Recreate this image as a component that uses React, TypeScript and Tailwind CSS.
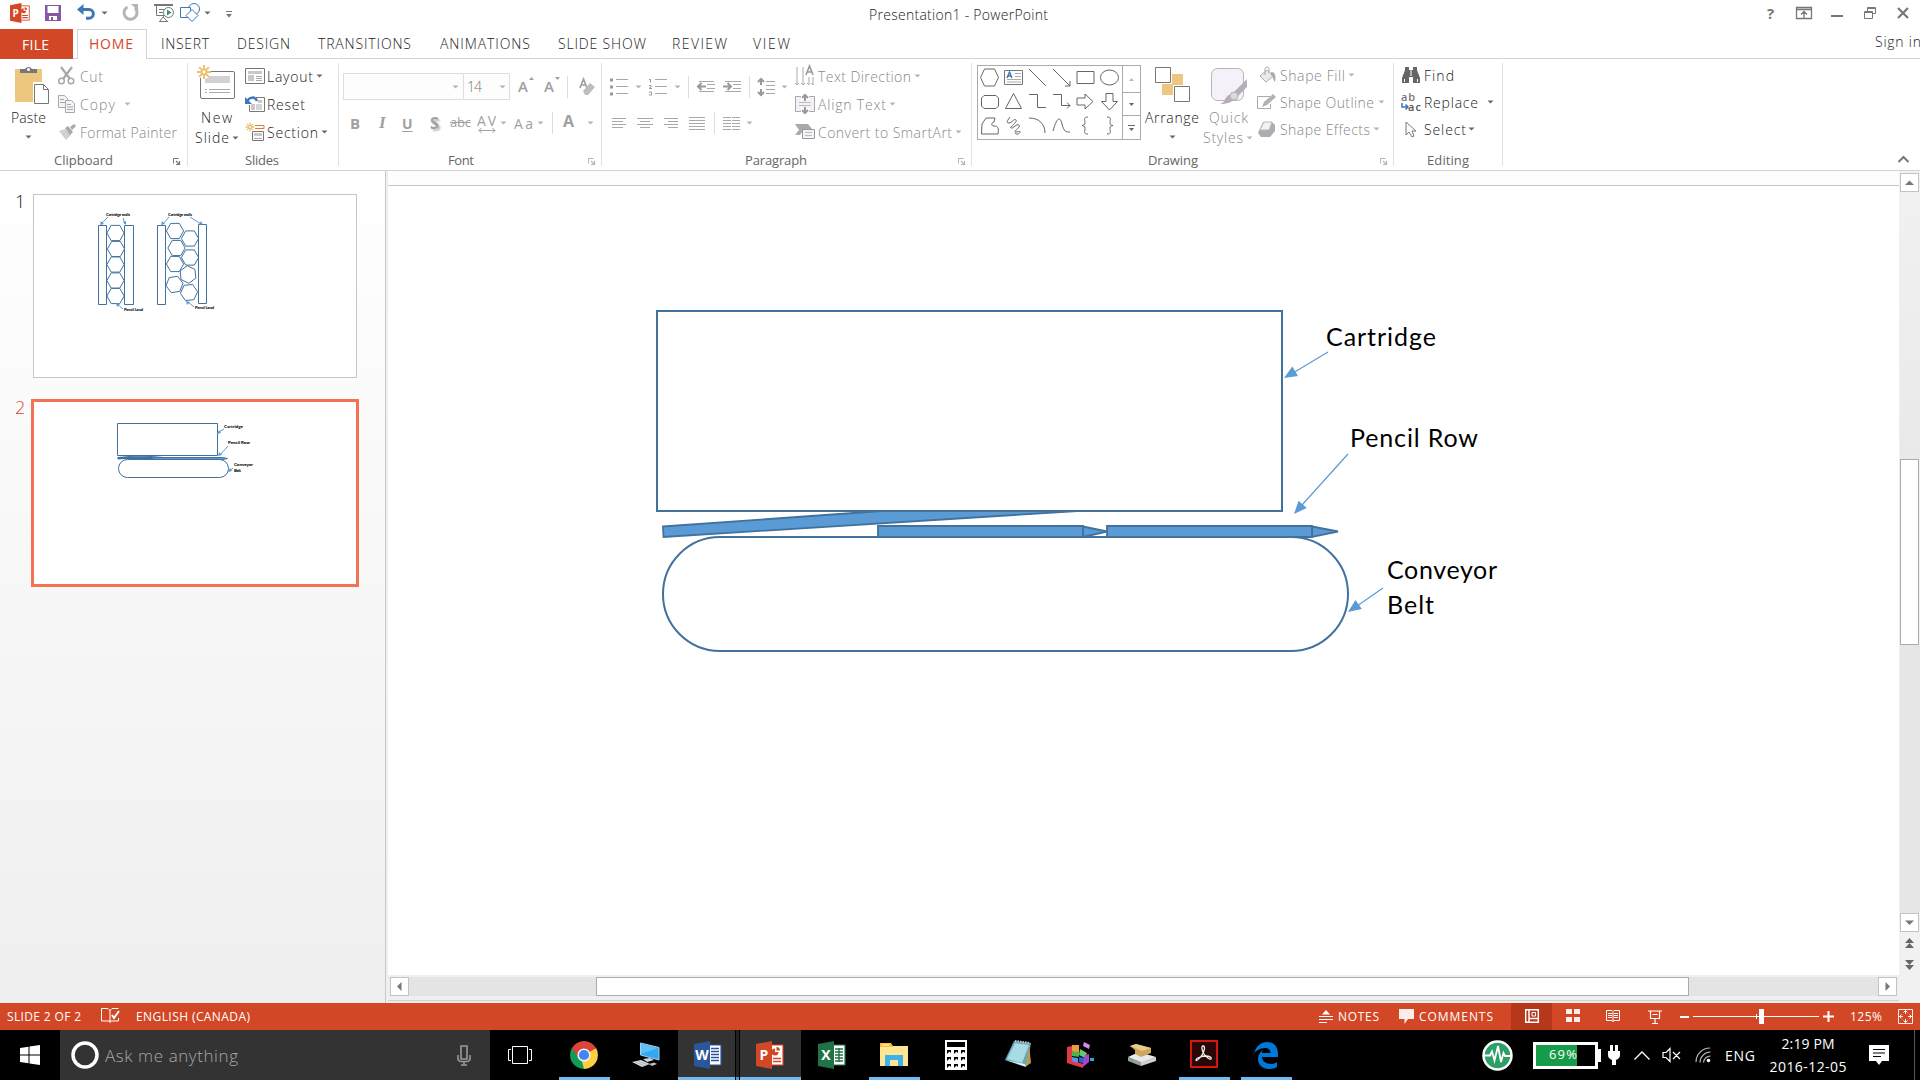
import React, { useLayoutEffect, useRef, useState } from "react";

type Kids = { children?: React.ReactNode };

/* Single line of text spaced to fill exactly `w` pixels. */
function Label({ t, w, className = "", inner = "" }: { t: string; w: number; className?: string; inner?: string }) {
  const ref = useRef<HTMLSpanElement>(null);
  const [ls, setLs] = useState(0);
  useLayoutEffect(() => {
    if (ref.current) {
      const natural = ref.current.getBoundingClientRect().width;
      setLs((w + 2 - natural) / Math.max(1, t.length - 1));
    }
  }, [t, w]);
  return (
    <span className={`block shrink-0 whitespace-nowrap ${className}`} style={{ width: w }}>
      <span ref={ref} className={`-ml-px inline-block ${inner}`} style={{ letterSpacing: ls }}>
        {t}
      </span>
    </span>
  );
}

function Ic({ w, h, className = "", children }: { w: number; h: number; className?: string } & Kids) {
  return (
    <svg width={w} height={h} viewBox={`0 0 ${w} ${h}`} fill="none" className={`block shrink-0 overflow-visible ${className}`}>
      {children}
    </svg>
  );
}

function Caret({ className = "", off = false }: { className?: string; off?: boolean }) {
  return (
    <Ic w={7} h={4} className={className}>
      <path d="M.5 .5h6l-3 3z" fill={off ? "#b5b5b5" : "#666"} />
    </Ic>
  );
}

function Row({ className = "", children }: { className?: string } & Kids) {
  return <div className={`flex h-7 items-center ${className}`}>{children}</div>;
}

function Launcher({ off = false, className = "" }: { off?: boolean; className?: string }) {
  const c = off ? "#b5b5b5" : "#777";
  return (
    <Ic w={7} h={7} className={className}>
      <path d="M.5 5.500V.5h5" stroke={c} />
      <path d="M3 3l3 3M6.500 3v3.500H3" stroke={c} strokeWidth="1.200" />
    </Ic>
  );
}

function Group({ className, foot, children }: { className: string; foot: React.ReactNode } & Kids) {
  return (
    <div className={`mt-1 h-[103px] shrink-0 border-r border-[#e1e1e1] ${className}`}>
      <div className="-mt-px flex h-[84px]">{children}</div>
      <div className="flex h-6 items-center pt-[6px] text-[13px] text-[#666]">{foot}</div>
    </div>
  );
}

function Lines({ x, w, ys, c = "#a8a8a8" }: { x: number; w: number; ys: number[]; c?: string }) {
  return (
    <>
      {ys.map((y) => (
        <path key={y} d={`M${x} ${y}h${w}`} stroke={c} />
      ))}
    </>
  );
}

function OfficeIcon({ letter, dark, kind, size = 28 }: { letter: string; dark: string; kind: string; size?: number }) {
  return (
    <svg width={size} height={size} viewBox="0 0 28 28" className="block shrink-0">
      <path d="M14 4h13v20H14z" fill="#fff" stroke={dark} strokeWidth="1.200" />
      {kind === "doc" && <path d="M17 7.500h8M17 10.500h8M17 13.500h8M17 16.500h8M17 19.500h8" stroke={dark} strokeWidth="1.500" />}
      {kind === "grid" && <path d="M17 8h8M17 11h8M17 14h8M17 17h8M17 20h8M21 7v14" stroke={dark} strokeWidth="1.400" />}
      {kind === "chart" && (
        <>
          <path d="M19 7.500a3.500 3.500 0 1 0 3.500 3.500H19z" fill={dark} />
          <path d="M20.500 6v3.500H24A3.500 3.500 0 0 0 20.500 6z" fill={dark} />
          <path d="M17 17.500h8M17 20.500h8" stroke={dark} strokeWidth="1.500" />
        </>
      )}
      <path d="M0 3L16 0v28L0 25z" fill={dark} />
      <text x="8" y="19" textAnchor="middle" fontSize="14" fontWeight="700" fill="#fff" fontFamily="Open Sans, sans-serif">
        {letter}
      </text>
    </svg>
  );
}

function TitleBar() {
  return (
    <div className="flex h-[29px] items-start">
      <div className="flex h-[25px] w-[868px] items-center">
        <div className="ml-[10px]">
          <OfficeIcon letter="P" dark="#d24726" kind="chart" size={20} />
        </div>
        <Ic w={16} h={16} className="ml-[15px]">
          <path d="M0 0h16v16H0z" fill="#8657a6" />
          <path d="M2.500 1h11v7h-11zM4 11h8v4H4z" fill="#fff" />
          <path d="M6 12h2v4H6z" fill="#8657a6" />
        </Ic>
        <Ic w={18} h={17} className="ml-4">
          <path d="M3 5.500h9a4.300 4.300 0 0 1 0 8.700H9" stroke="#3f76b5" strokeWidth="3" />
          <path d="M0 5.500L6.500 0v11z" fill="#3f76b5" />
        </Ic>
        <Caret className="ml-[6px]" />
        <Ic w={17} h={17} className="ml-[14px]">
          <path d="M5.500 3A6.500 6.500 0 1 0 13 4" stroke="#b5b5b5" strokeWidth="3" />
          <path d="M9 0h7v7z" fill="#b5b5b5" />
        </Ic>
        <Ic w={20} h={18} className="ml-[15px]">
          <path d="M0 1h19" stroke="#777" strokeWidth="2" />
          <path d="M2.500 2v9.500h8M5 5.500h5M5 8.500h4M10 12l-4 5M9 13l4 4M5 17.500h9" stroke="#777" />
          <circle cx="14.500" cy="8.500" r="5" fill="#fff" stroke="#777" />
          <path d="M13 5.500l4.500 3-4.500 3z" fill="#38976f" />
        </Ic>
        <Ic w={20} h={19} className="ml-[6px]">
          <circle cx="14" cy="6" r="5.500" stroke="#3f76b5" />
          <path d="M.5 4.500h10v10H.5z" fill="#fff" stroke="#3f76b5" />
          <path d="M12 6.500l6 6-6 6-6-6z" fill="#fff" stroke="#3f76b5" />
        </Ic>
        <Caret className="ml-[4px]" />
        <Ic w={6} h={7} className="ml-[15px] mt-[3px]">
          <path d="M0 .5h6" stroke="#777" />
          <path d="M0 3h6L3 6.500z" fill="#777" />
        </Ic>
      </div>
      <Label t="Presentation1 - PowerPoint" w={177} className="ml-[2px] mt-[5px] text-[14px] font-light leading-[20px] text-[#222]" />
      <div className="ml-auto mr-[11px] flex h-[26px] items-center">
        <Label t="?" w={8} className="mr-[20px] text-[15px] font-bold text-[#777]" />
        <Ic w={16} h={12} className="mr-[19px]">
          <path d="M.5.5h15v11H.5zM1 2.500h14M8 11V5M5 7.500l3-3 3 3" stroke="#777" strokeWidth="1.300" />
        </Ic>
        <Ic w={12} h={12} className="mr-[21px]">
          <path d="M0 9h12" stroke="#777" strokeWidth="2" />
        </Ic>
        <Ic w={12} h={12} className="mr-[21px]">
          <path d="M3.500 4V.5h8v6H9M.5 4.500h8v7h-8zM3 1.500h8M1 5.500h7" stroke="#777" />
        </Ic>
        <Ic w={12} h={12}>
          <path d="M1 1l10 10M11 1L1 11" stroke="#777" strokeWidth="2.200" />
        </Ic>
      </div>
    </div>
  );
}

function Tabs() {
  return (
    <div className="flex h-[30px] text-[14px] font-light text-[#222]">
      <div className="flex w-[73px] items-center bg-[#d24726] pl-[23px] font-normal text-white">
        <Label t="FILE" w={25} />
      </div>
      <div className="w-1 border-b border-[#d4d4d4]" />
      <div className="flex w-[70px] items-center border-x border-t border-[#d4d4d4] pb-[2px] pl-[12px] font-normal text-[#d24726]">
        <Label t="HOME" w={42} />
      </div>
      <div className="flex flex-1 items-center border-b border-[#d4d4d4] pb-px pl-[15px]">
        <Label t="INSERT" w={46} />
        <Label t="DESIGN" w={51} className="ml-[30px]" />
        <Label t="TRANSITIONS" w={91} className="ml-[30px]" />
        <Label t="ANIMATIONS" w={88} className="ml-[31px]" />
        <Label t="SLIDE SHOW" w={86} className="ml-[30px]" />
        <Label t="REVIEW" w={53} className="ml-[28px]" />
        <Label t="VIEW" w={35} className="ml-[28px]" />
        <Label t="Sign in" w={44} className="-mt-[3px] ml-auto" />
      </div>
    </div>
  );
}

function ClipboardGroup() {
  return (
    <Group
      className="w-[188px]"
      foot={
        <>
          <Label t="Clipboard" w={57} className="ml-[55px]" />
          <Launcher className="ml-[61px]" />
        </>
      }
    >
      <div className="flex w-[57px] flex-col pt-[4px]">
        <Ic w={35} h={39} className="ml-[15px]">
          <path d="M0 3h27v33H0z" fill="#edc77f" />
          <path d="M5 7V3h5a4 4 0 0 1 7 0h5v4z" fill="#777" />
          <circle cx="13.500" cy="3.500" r="1.500" fill="#fff" />
          <path d="M18 16h17v22H18z" fill="#fff" />
          <path d="M19.500 18.500h9l5 5v14h-14zM28.500 18.500v5h5" fill="#fff" stroke="#777" />
        </Ic>
        <Label t="Paste" w={33} className="ml-[12px] mt-[2px] text-[14px] font-light text-[#222]" />
        <Caret className="ml-[25px] mt-[7px]" />
      </div>
      <div className="text-[14px] font-light text-[#888]">
        <Row>
          <Ic w={17} h={18} className="ml-px">
            <path d="M3 0l9 12M14 0L5 12" stroke="#a8a8a8" strokeWidth="2.200" />
            <circle cx="3.500" cy="14" r="2.800" stroke="#a8a8a8" strokeWidth="1.500" />
            <circle cx="13" cy="14" r="2.800" stroke="#a8a8a8" strokeWidth="1.500" />
          </Ic>
          <Label t="Cut" w={21} className="ml-[6px]" />
        </Row>
        <Row>
          <Ic w={17} h={18} className="ml-px">
            <path d="M.5.5h6l3 3v9h-9z" fill="#f6f1f8" stroke="#a8a8a8" />
            <path d="M2 4.500h4M2 7.500h5" stroke="#a8a8a8" />
            <path d="M7.500 5.500h6l3 3v9h-9z" fill="#f6f1f8" stroke="#a8a8a8" />
            <path d="M9 9.500h4M9 12h6M9 14.500h6" stroke="#a8a8a8" />
          </Ic>
          <Label t="Copy" w={33} className="ml-[6px]" />
          <Caret off className="ml-[10px]" />
        </Row>
        <Row>
          <Ic w={17} h={16} className="ml-[2px]">
            <path d="M0 7l6-2 6 6-5 5z" fill="#d2ced4" />
            <path d="M6 4l3-2 5 6-3 3zM11 3l4-3 2 2-4 4z" fill="#aaa" />
          </Ic>
          <Label t="Format Painter" w={95} className="ml-[5px]" />
        </Row>
      </div>
    </Group>
  );
}

function Burst({ s = 7 }: { s?: number }) {
  return (
    <g stroke="#edc170" strokeWidth={s / 3.5}>
      <path d={`M${-s} 0H${s}M0 ${-s}V${s}M${-s * 0.7} ${-s * 0.7}L${s * 0.7} ${s * 0.7}M${s * 0.7} ${-s * 0.7}L${-s * 0.7} ${s * 0.7}`} />
      <circle r={s * 0.35} fill="#fff" />
    </g>
  );
}

function SlidesGroup() {
  return (
    <Group className="w-[151px]" foot={<Label t="Slides" w={32} className="ml-[58px]" />}>
      <div className="flex w-[56px] flex-col pt-[3px] text-[14px] font-light text-[#222]">
        <Ic w={38} h={35} className="ml-[9px]">
          <rect x="3.500" y="6.500" width="34" height="27" rx="1.500" stroke="#777" fill="#fff" />
          <path d="M8 11h25v7H8z" fill="#d2d2d2" />
          <path d="M12 24.500h21M12 27.500h21M8 24.500h2M8 27.500h2" stroke="#aaa" />
          <circle cx="7" cy="7" r="7" fill="#fff" />
          <g transform="translate(7 7)">
            <Burst />
          </g>
        </Ic>
        <Label t="New" w={29} className="ml-[14px] mt-[7px]" />
        <div className="-mt-px flex items-center">
          <Label t="Slide" w={32} className="ml-[8px]" />
          <Caret className="ml-[4px]" />
        </div>
      </div>
      <div className="text-[14px] font-light text-[#222]">
        <Row>
          <Ic w={20} h={16} className="ml-px">
            <path d="M.5.5h19v15H.5z" stroke="#777" />
            <path d="M3 3h14v3H3zM3 7h6v6H3z" fill="#c8c8c8" />
            <path d="M11 8.500h6M11 10.500h6M11 12.500h6" stroke="#aaa" />
          </Ic>
          <Label t="Layout" w={44} className="ml-[3px]" />
          <Caret className="ml-[4px]" />
        </Row>
        <Row>
          <Ic w={20} h={17} className="ml-px">
            <path d="M11 1.500h8.500v14h-15V9" stroke="#777" />
            <path d="M13 4h4v3h-4zM6 8h4v6H6z" fill="#c8c8c8" />
            <path d="M11 9h6M11 11h6M11 13h6" stroke="#aaa" />
            <path d="M2 5C5 1 10 0 12 5" stroke="#3f76b5" strokeWidth="2.500" />
            <path d="M0 1v7h7z" fill="#3f76b5" />
          </Ic>
          <Label t="Reset" w={36} className="ml-[3px]" />
        </Row>
        <Row>
          <Ic w={19} h={18} className="ml-[2px]">
            <path d="M9 2.500h9v3H9" stroke="#e07b35" />
            <path d="M6.500 8.500h11v9h-11z" stroke="#777" />
            <path d="M8 10h8v3H8z" fill="#c8c8c8" />
            <path d="M8 15.500h8" stroke="#aaa" />
            <g transform="translate(4 4)">
              <Burst s={4.500} />
            </g>
          </Ic>
          <Label t="Section" w={49} className="ml-[3px]" />
          <Caret className="ml-[4px]" />
        </Row>
      </div>
    </Group>
  );
}

function Sep({ className = "" }: { className?: string }) {
  return <div className={`h-[22px] w-px shrink-0 bg-[#dedede] ${className}`} />;
}

function FontGroup() {
  return (
    <Group
      className="w-[263px]"
      foot={
        <>
          <Label t="Font" w={24} className="ml-[110px]" />
          <Launcher off className="ml-[115px]" />
        </>
      }
    >
      <div className="flex flex-col text-[#a0a0a0]">
        <div className="mt-[11px] flex h-[27px] items-center pl-[4px]">
          <div className="flex h-[27px] w-[121px] items-center border border-[#dedede] bg-[#fdfdfd]">
            <Caret off className="ml-[108px]" />
          </div>
          <div className="-ml-px flex h-[27px] w-[47px] items-center border border-[#dedede] bg-[#fdfdfd]">
            <Label t="14" w={13} className="ml-[4px] text-[14px] font-light text-[#777]" />
            <Caret off className="ml-[18px]" />
          </div>
          <Label t="A" w={10} className="ml-[9px] text-[15px] font-semibold" />
          <Ic w={5} h={3} className="-mt-4">
            <path d="M0 3h5L2.500 0z" fill="#a0a0a0" />
          </Ic>
          <Label t="A" w={10} className="ml-[11px] text-[15px] font-semibold" />
          <Ic w={5} h={3} className="-mt-4">
            <path d="M0 0h5L2.500 3z" fill="#a0a0a0" />
          </Ic>
          <Sep className="ml-[7px]" />
          <Ic w={17} h={19} className="ml-[11px]">
            <path d="M1 11L4.500 2 8 11M2.500 8h4" stroke="#a0a0a0" strokeWidth="1.700" />
            <path d="M4 14l7-8 5 4-7 8H6z" fill="#bdbdbd" />
          </Ic>
        </div>
        <div className="mt-[9px] flex h-[28px] items-center">
          <Label t="B" w={9} className="ml-[12px] text-[15px] font-bold" />
          <span className="ml-[19px] w-[9px] font-['Liberation_Serif'] text-[17px] font-bold italic">I</span>
          <span className="ml-[14px] w-[11px] text-[14px] font-bold underline underline-offset-2">U</span>
          <span className="ml-[17px] w-[12px] text-[16px] font-bold [text-shadow:2px_2px_2px_#bbb]">S</span>
          <Label t="abc" w={19} className="ml-[9px] text-[13px]" inner="line-through decoration-1" />
          <div className="ml-[8px] flex flex-col">
            <Label t="AV" w={17} className="text-[14px] leading-[14px]" />
            <Ic w={18} h={5}>
              <path d="M1 2.500h16M3.500 0L1 2.500 3.500 5M14.500 0L17 2.500 14.500 5" stroke="#a0a0a0" />
            </Ic>
          </div>
          <Caret off className="ml-[4px]" />
          <Label t="Aa" w={17} className="ml-[8px] text-[14px]" />
          <Caret off className="ml-[5px]" />
          <Sep className="ml-[8px]" />
          <Label t="A" w={13} className="-mt-1 ml-[11px] text-[16px] font-bold" />
          <Caret off className="ml-[10px]" />
        </div>
      </div>
    </Group>
  );
}

function Arrows({ d }: { d: string }) {
  return <path d={d} stroke="#999" strokeWidth="2" />;
}

function ParagraphGroup() {
  return (
    <Group
      className="w-[370px]"
      foot={
        <>
          <Label t="Paragraph" w={60} className="ml-[144px]" />
          <Launcher off className="ml-[152px]" />
        </>
      }
    >
      <div className="flex w-[193px] flex-col">
        <div className="mt-[11px] flex h-[27px] items-center pl-[8px]">
          <Ic w={18} h={18}>
            <path d="M0 2h3M0 9h3M0 16h3" stroke="#999" strokeWidth="3" />
            <Lines x={6} w={12} ys={[1.5, 8.5, 15.5]} />
          </Ic>
          <Caret off className="ml-[7px]" />
          <Ic w={18} h={18} className="ml-[7px]">
            <path d="M0 1.500h1.500v3M0 7.500h2v1.500l-2 1.500h3M0 14h2.500v3H0" stroke="#999" />
            <Lines x={6} w={12} ys={[1.5, 8.5, 15.5]} />
          </Ic>
          <Caret off className="ml-[7px]" />
          <Sep className="ml-[7px]" />
          <Ic w={18} h={11} className="ml-[8px]">
            <Lines x={2} w={15} ys={[0.5, 10.5]} />
            <Lines x={10} w={8} ys={[3.5, 7.5]} />
            <Arrows d="M1 5.500h8M4.500 2L1 5.500 4.500 9" />
          </Ic>
          <Ic w={18} h={11} className="ml-[8px]">
            <Lines x={2} w={16} ys={[0.5, 10.5]} />
            <Lines x={10} w={8} ys={[3.5, 7.5]} />
            <Arrows d="M0 5.500h8M4.500 2L8 5.500 4.500 9" />
          </Ic>
          <Sep className="ml-[8px]" />
          <Ic w={17} h={18} className="ml-[8px]">
            <Lines x={8} w={9} ys={[3.5, 7.5, 11.5, 15.5]} />
            <Arrows d="M3 1v6M0 4l3-3 3 3M3 11v6M0 14l3 3 3-3" />
          </Ic>
          <Caret off className="ml-[6px]" />
        </div>
        <div className="mt-[9px] flex h-[28px] items-center pl-[10px]">
          <Ic w={14} h={13}>
            <Lines x={0} w={14} ys={[1.5, 7.5]} />
            <Lines x={0} w={11} ys={[4.5, 10.5]} />
          </Ic>
          <Ic w={16} h={13} className="ml-[11px]">
            <Lines x={0} w={16} ys={[1.5, 7.5]} />
            <Lines x={3} w={10} ys={[4.5, 10.5]} />
          </Ic>
          <Ic w={14} h={13} className="ml-[11px]">
            <Lines x={0} w={14} ys={[1.5, 7.5]} />
            <Lines x={4} w={10} ys={[4.5, 10.5]} />
          </Ic>
          <Ic w={16} h={13} className="ml-[11px]">
            <Lines x={0} w={16} ys={[0.5, 3.5, 6.5, 9.5, 12.5]} />
          </Ic>
          <Sep className="ml-[9px]" />
          <Ic w={17} h={13} className="ml-[8px]">
            <Lines x={0} w={8} ys={[0.5, 3.5, 6.5, 9.5, 12.5]} />
            <Lines x={9} w={8} ys={[0.5, 3.5, 6.5, 9.5, 12.5]} />
          </Ic>
          <Caret off className="ml-[6px]" />
        </div>
      </div>
      <div className="text-[14px] font-light text-[#888]">
        <Row>
          <Ic w={20} h={20}>
            <path d="M2 1v18M8 1v18M14 11v8M18 11v8M0 17l2 2 2-2M6 17l2 2 2-2M12 17l2 2M16 17l2 2" stroke="#aaa" />
            <path d="M11 9l3.500-9L18 9M12 6h5" stroke="#999" strokeWidth="1.600" />
          </Ic>
          <Label t="Text Direction" w={91} className="ml-[4px]" />
          <Caret off className="ml-[4px]" />
        </Row>
        <Row>
          <Ic w={20} h={18}>
            <path d="M.5 1.500h19v15H.5z" fill="#f6f1f8" stroke="#aaa" />
            <path d="M6 0h8v5H6zM6 13h8v5H6z" fill="#fff" />
            <path d="M4 7.500h12M4 10.500h12" stroke="#bbb" />
            <Arrows d="M10 0v6M7 3l3-3 3 3M10 12v6M7 15l3 3 3-3" />
          </Ic>
          <Label t="Align Text" w={66} className="ml-[4px]" />
          <Caret off className="ml-[4px]" />
        </Row>
        <Row>
          <Ic w={20} h={16}>
            <path d="M0 0h13l4 5H9l-4 6H0l4-5z" fill="#aaa" />
            <path d="M7.500 5.500h12v9h-12z" fill="#f6f1f8" stroke="#999" />
            <path d="M10 8.500h7M10 11.500h7" stroke="#bbb" />
          </Ic>
          <Label t="Convert to SmartArt" w={132} className="ml-[4px]" />
          <Caret off className="ml-[4px]" />
        </Row>
      </div>
    </Group>
  );
}

const shapePaths = [
  "M4.500 1h10l4 8.500-4 8.500h-10L.5 9.500z",
  "text",
  "M1 1l17 17",
  "M1 1l17 17M18 13v5h-5",
  "M1 3.500h17v12H1z",
  "M18.500 9.500a9 7.500 0 1 1-18 0 9 7.500 0 1 1 18 0z",
  "M4 3.500h12l2.500 2.500v8L16 16.500H4L1.500 14V6z",
  "M9.500 1.500l8 15h-16z",
  "M1 2.500h8.500v13H18",
  "M1 2.500h8.500v11H18M15 10.500l3 3-3 3",
  "M1 6h8V2l8 7.500L9 17v-4H1z",
  "M6 1.500h7v8h4.500L9.500 18 1.500 9.500H6z",
  "M2 8l4-6h9l-1 4c-3 1-3 4 0 4 4 0 5 2 4 8H1.500z",
  "M6 1c-3 4-4 6-1 6s5-5 7-3-7 7-5 8 6-5 8-3-5 6-4 7 5-2 5 0-4 3-5 1",
  "M1 2c10 0 16 6 16 15",
  "M1 15C5 1 8 0 10 8s4 8 8 8",
  "M12 1C7 1 9 4 9 6.500S8 9 6 9.500c2 .5 3 .5 3 3S7 18 12 18",
  "M7 1c5 0 3 3 3 5.500S11 9 13 9.500c-2 .5-3 .5-3 3S12 18 7 18",
];

function DrawingGroup() {
  return (
    <Group
      className="w-[422px]"
      foot={
        <>
          <Label t="Drawing" w={48} className="ml-[177px]" />
          <Launcher off className="ml-[183px]" />
        </>
      }
    >
      <div className="ml-[5px] mt-[3px] flex h-[75px] w-[164px] border border-[#ababab]">
        <div className="grid w-[145px] grid-cols-6 grid-rows-3 place-items-center border-r border-[#ababab] pb-[2px] pr-px">
          {shapePaths.map((d, i) => (
            <svg key={i} width={19} height={19} viewBox="0 0 19 19" fill="none">
              {d === "text" ? (
                <>
                  <path d="M.5 2.500h18v14H.5z" stroke="#777" />
                  <path d="M11 5.500h6M11 8.500h6M3 11.500h14M3 14h14" stroke="#aaa" />
                  <path d="M3 10l2.500-6L8 10M4 8h3" stroke="#3f76b5" strokeWidth="1.400" />
                </>
              ) : (
                <path d={d} stroke="#666" />
              )}
            </svg>
          ))}
        </div>
        <div className="flex flex-1 flex-col">
          <div className="flex h-[26px] items-center justify-center">
            <Ic w={5} h={3}>
              <path d="M0 3h5L2.500 0z" fill="#bbb" />
            </Ic>
          </div>
          <div className="flex h-[24px] items-center justify-center border-y border-[#ababab]">
            <Ic w={5} h={3}>
              <path d="M0 0h5L2.500 3z" fill="#666" />
            </Ic>
          </div>
          <div className="flex flex-1 items-center justify-center">
            <Ic w={7} h={6}>
              <path d="M0 .5h7" stroke="#666" />
              <path d="M1 3h5L3.500 6z" fill="#666" />
            </Ic>
          </div>
        </div>
      </div>
      <div className="flex w-[57px] flex-col pt-[5px] text-[14px] font-light text-[#222]">
        <Ic w={35} h={35} className="ml-[14px]">
          <path d="M17 7h11v11H17zM7 17h11v11H7z" fill="#edc77f" />
          <path d="M.5.5h15v15H.5zM19.500 19.500h15v15h-15z" fill="#fff" stroke="#777" />
        </Ic>
        <Label t="Arrange" w={52} className="ml-[5px] mt-[5px]" />
        <Caret className="ml-[28px] mt-[7px]" />
      </div>
      <div className="flex w-[57px] flex-col pt-[6px] text-[14px] font-light text-[#888]">
        <Ic w={37} h={37} className="ml-[13px]">
          <rect x=".5" y=".5" width="32" height="32" rx="6" fill="#f6f1f8" stroke="#b5b5b5" />
          <path d="M36 11v8L25 30l-4-4z" fill="#b5b0b8" />
          <path d="M9 36c6-1 5-11 12-9 5 2 2 9-12 9z" fill="#b5b0b8" />
          <circle cx="23" cy="28" r="4" fill="#ddd8e0" stroke="#b5b0b8" />
        </Ic>
        <Label t="Quick" w={37} className="ml-[12px] mt-[2px]" />
        <div className="-mt-px flex items-center">
          <Label t="Styles" w={38} className="ml-[6px]" />
          <Caret off className="ml-[4px]" />
        </div>
      </div>
      <div className="text-[14px] font-light text-[#888]">
        <Row className="-mt-px">
          <Ic w={17} h={17} className="ml-[4px]">
            <path d="M1 9l7-6 6 6-7 6z" fill="#eee9f0" stroke="#aaa" />
            <path d="M6 8V2a2 2 0 0 1 4 0v4" stroke="#aaa" />
            <path d="M12 5c5 0 5 5 4 10-2-2-2-6-4-7z" fill="#aaa" />
          </Ic>
          <Label t="Shape Fill" w={63} className="ml-[5px]" />
          <Caret off className="ml-[4px]" />
        </Row>
        <Row className="-mt-px">
          <Ic w={19} h={14} className="ml-[2px]">
            <path d="M13 1.500H.5v12h13V9" stroke="#aaa" />
            <path d="M5 12l2-5 9-8 3 3-9 8z" fill="#b5b0b8" />
          </Ic>
          <Label t="Shape Outline" w={92} className="ml-[5px]" />
          <Caret off className="ml-[5px]" />
        </Row>
        <Row className="-mt-px">
          <Ic w={19} h={17} className="ml-[2px]">
            <path d="M6 1h9l3 3v6l-5 6H4l-3-4z" fill="#b0abb3" />
            <path d="M7 1h8l-3 8H3z" fill="#f6f1f8" stroke="#bbb" />
          </Ic>
          <Label t="Shape Effects" w={88} className="ml-[5px]" />
          <Caret off className="ml-[4px]" />
        </Row>
      </div>
    </Group>
  );
}

function EditingGroup() {
  return (
    <Group className="w-[109px]" foot={<Label t="Editing" w={40} className="ml-[34px]" />}>
      <div className="pl-[7px] text-[14px] font-light text-[#222]">
        <Row className="-mt-px">
          <Ic w={18} h={16} className="ml-px">
            <path d="M3 0h4v3h4V0h4v3l3 8v5h-7v-6H7v6H0v-5l3-8z" fill="#666" />
            <path d="M9 3v6M2.500 12v3M15.500 12v3" stroke="#fff" />
          </Ic>
          <Label t="Find" w={28} className="ml-[5px]" />
        </Row>
        <Row className="-mt-px">
          <div className="flex w-[20px] flex-col text-[11px] font-semibold leading-[10px]">
            <Label t="ab" w={12} className="ml-px text-[#777]" />
            <div className="flex">
              <Ic w={8} h={8} className="mt-px">
                <path d="M1 0v4h6M4.500 1.500L7 4 4.500 6.500" stroke="#3f76b5" strokeWidth="1.500" />
              </Ic>
              <Label t="ac" w={11} className="text-[#555]" />
            </div>
          </div>
          <Label t="Replace" w={52} className="ml-[4px]" />
          <Caret className="ml-[10px]" />
        </Row>
        <Row className="-mt-px">
          <Ic w={11} h={17} className="ml-[4px]">
            <path d="M1 1v13l3-3 3 5 2-1-2-5h4z" fill="#fff" stroke="#777" />
          </Ic>
          <Label t="Select" w={40} className="ml-[9px]" />
          <Caret className="ml-[3px]" />
        </Row>
      </div>
    </Group>
  );
}

function Ribbon() {
  return (
    <div className="flex h-[112px] border-b border-[#d4d4d4] bg-white">
      <ClipboardGroup />
      <SlidesGroup />
      <FontGroup />
      <ParagraphGroup />
      <DrawingGroup />
      <EditingGroup />
      <div className="ml-auto flex items-end pb-[8px] pr-[11px]">
        <Ic w={11} h={6}>
          <path d="M.5 6l5-5 5 5" stroke="#777" strokeWidth="2" />
        </Ic>
      </div>
    </div>
  );
}

function hexPoints(cx: number, cy: number, rot = 0) {
  return Array.from({ length: 6 }, (_, i) => {
    const a = ((i * 60 + rot) * Math.PI) / 180;
    return `${(cx + 8.6 * Math.cos(a)).toFixed(1)},${(cy + 8.8 * Math.sin(a)).toFixed(1)}`;
  }).join(" ");
}

const hexes: [number, number, number][] = [
  [81.500, 38, 0], [82, 54, 0], [81.500, 69.500, 0], [81.500, 85.500, 0], [81.500, 101, 0],
  [141, 36, 0], [156, 43.500, 0], [142.500, 53, 0], [156, 62.500, 0], [141, 69, 0],
  [154, 79.500, 25], [140.500, 89.500, -8], [155, 97.500, -5],
];

function ThumbOne() {
  return (
    <Ic w={322} h={182}>
      <g stroke="#41719c" fill="#fff">
        <path d="M64.500 30.500h8v79h-8zM90.500 30.500h9v79h-9zM123.500 30.500h8v79h-8zM164.500 29.500h8v79h-8z" />
        <g fill="none">
          {hexes.map(([x, y, r]) => (
            <polygon key={`${x}-${y}`} points={hexPoints(x, y, r)} />
          ))}
        </g>
      </g>
      <path d="M74 22l-6 6M89 23l2 6M135 22l-6 7M156 22l11 7M83 109l6 5M154 107l6 5" stroke="#5b9bd5" />
      <path d="M66 30l1-4 3 3zM92 30l-3-3 3-1zM127 30l1-4 3 3zM169 30l-2-4-2 3zM82 108l4 1-3 3zM152 106l4 1-3 3z" fill="#5b9bd5" />
      <g fontSize="4" fontWeight="900" fill="#000" fontFamily="Lato, sans-serif">
        <text x="72" y="20.500" textLength="24">Cartridge walls</text>
        <text x="134" y="20.500" textLength="24">Cartridge walls</text>
        <text x="90" y="115.500" textLength="19">Pencil Lead</text>
        <text x="161" y="113.500" textLength="19">Pencil Lead</text>
      </g>
    </Ic>
  );
}

function ThumbTwo() {
  return (
    <Ic w={322} h={182}>
      <path d="M84 55.500l30-2.500h22l-52 4z" fill="#5b9bd5" stroke="#41719c" />
      <path d="M83.500 21.500h100v32h-100z" fill="#fff" stroke="#41719c" />
      <path d="M84 55.500h34v1H84zM118.500 55.500h70l5 1-5 1h-70z" fill="#5b9bd5" stroke="#41719c" />
      <rect x="84.500" y="57.500" width="110" height="18" rx="9" fill="#fff" stroke="#41719c" />
      <path d="M190 27l-5 3M194 44l-8 9M199 66l-4 3" stroke="#5b9bd5" />
      <path d="M183 32l2-4 2 3zM184 54l1-4 3 3zM194 70l2-4 2 3z" fill="#5b9bd5" />
      <g fontSize="4.500" fontWeight="900" fill="#000" fontFamily="Lato, sans-serif">
        <text x="190" y="26" textLength="19">Cartridge</text>
        <text x="194" y="42" textLength="22">Pencil Row</text>
        <text x="200" y="64" textLength="19">Conveyor</text>
        <text x="200" y="70" textLength="7">Belt</text>
      </g>
    </Ic>
  );
}

function SlidePanel() {
  return (
    <div className="flex w-[386px] shrink-0 flex-col border-r border-[#c9c9c9] bg-linear-to-b from-white to-[#efefef] pt-[23px] text-[18px] leading-[18px]">
      <div className="flex">
        <div className="-mt-[2px] w-[33px] pl-[15px] font-light text-[#222]">1</div>
        <div className="h-[184px] w-[324px] border border-[#c6c6c6] bg-white">
          <ThumbOne />
        </div>
      </div>
      <div className="mt-[21px] flex">
        <div className="-mt-px w-[31px] pl-[15px] font-light text-[#d24726]">2</div>
        <div className="h-[188px] w-[328px] border-[3px] border-[#f27354] bg-white">
          <ThumbTwo />
        </div>
      </div>
    </div>
  );
}

function Head({ x, y, a }: { x: number; y: number; a: number }) {
  return <path d="M0 0L13 -5.500V5.500z" fill="#5b9bd5" transform={`translate(${x} ${y}) rotate(${a})`} />;
}

function SlideDiagram() {
  return (
    <svg width={1511} height={789} viewBox="388 186 1511 789" fill="none" className="block">
      <path d="M663 526.500L910 509h200L663.500 537z" fill="#5b9bd5" stroke="#41719c" strokeWidth="1.800" />
      <path d="M657 311h625v200H657z" fill="#fff" stroke="#41719c" strokeWidth="2" />
      <rect x="663" y="537" width="685" height="114" rx="57" fill="#fff" stroke="#41719c" strokeWidth="2" />
      <g fill="#5b9bd5" stroke="#41719c" strokeWidth="1.800">
        <path d="M1083 526.500l24 5-24 5.500zM1312 526.500l26 5-26 5.500z" />
        <path d="M878 526h205v11H878zM1107 526h205v11h-205z" />
      </g>
      <path d="M1328 352l-35 21M1348 454l-46 51M1383 588l-26 18" stroke="#5b9bd5" strokeWidth="1.200" />
      <Head x={1284} y={378} a={-31} />
      <Head x={1294} y={514} a={-48} />
      <Head x={1348} y={612} a={-35} />
      <g fontSize="25" fill="#000" fontFamily="Lato, sans-serif">
        <text x="1326" y="346" textLength="110">Cartridge</text>
        <text x="1350" y="447" textLength="128">Pencil Row</text>
        <text x="1387" y="579" textLength="110">Conveyor</text>
        <text x="1387" y="614" textLength="47">Belt</text>
      </g>
    </svg>
  );
}

function ScrollButton({ d, className = "" }: { d: string; className?: string }) {
  return (
    <div className={`flex h-[19px] w-[19px] shrink-0 items-center justify-center border border-[#c3c3c3] bg-white ${className}`}>
      <Ic w={9} h={9}>
        <path d={d} fill="#777" />
      </Ic>
    </div>
  );
}

function Workspace() {
  return (
    <div className="flex h-[832px] bg-[#efefef]">
      <SlidePanel />
      <div className="flex w-[1513px] flex-col pl-[2px]">
        <div className="h-[15px] border-b border-[#c6c6c6] bg-[#fdfdfd]" />
        <div className="h-[789px] bg-white">
          <SlideDiagram />
        </div>
        <div className="mt-[2px] flex h-[19px] pl-[2px]">
          <ScrollButton d="M2 4.500L6.500 0v9z" />
          <div className="w-[187px] bg-[#e4e4e4]" />
          <div className="w-[1093px] border border-[#ababab] bg-white" />
          <div className="w-[189px] bg-[#e4e4e4]" />
          <ScrollButton d="M7 4.500L2.500 0v9z" />
        </div>
        <div className="mt-[4px] h-px bg-[#d0d0d0]" />
      </div>
      <div className="flex flex-1 flex-col items-start bg-[#f1f1f1] pl-px pt-[2px]">
        <ScrollButton d="M0 7h9L4.500 2.500z" />
        <div className="h-[267px] w-full bg-linear-to-b from-[#f1f1f1] to-[#e9e9e9]" />
        <div className="h-[186px] w-[19px] border border-[#ababab] bg-white" />
        <div className="h-[268px] w-full bg-[#e6e6e6]" />
        <ScrollButton d="M0 2.500h9L4.500 7z" />
        <Ic w={9} h={10} className="ml-[5px] mt-[6px]">
          <path d="M0 5h9L4.500 0zM0 10h9L4.500 5z" fill="#666" />
        </Ic>
        <Ic w={9} h={10} className="ml-[5px] mt-[12px]">
          <path d="M0 0h9L4.500 5zM0 5h9L4.500 10z" fill="#666" />
        </Ic>
      </div>
    </div>
  );
}

function StatusBar() {
  return (
    <div className="flex h-[27px] items-center bg-[#d24726] text-[12px] text-white">
      <Label t="SLIDE 2 OF 2" w={72} className="ml-[8px]" />
      <Ic w={18} h={16} className="-mt-1 ml-[21px]">
        <path d="M9 14H.5V1.500H7l2 2 2-2h6.500M9 3v13M17.500 11v3H9" stroke="#fff" />
        <path d="M11 8l2 3 5-7" stroke="#fff" strokeWidth="2" />
      </Ic>
      <Label t="ENGLISH (CANADA)" w={112} className="ml-[18px]" />
      <div className="ml-auto flex h-full items-center">
        <Ic w={14} h={14}>
          <path d="M3 4.500h8L7 0z" fill="#fff" />
          <path d="M0 6.500h14M0 9.500h14M0 12.500h8" stroke="#fff" />
        </Ic>
        <Label t="NOTES" w={39} className="ml-[6px]" />
        <Ic w={15} h={15} className="ml-[21px]">
          <path d="M0 0h15v10H9l-3.500 5v-5H0z" fill="#fff" opacity=".9" />
        </Ic>
        <Label t="COMMENTS" w={72} className="ml-[6px]" />
        <div className="ml-[19px] flex h-full w-[41px] items-center justify-center bg-[#b7371b]">
          <Ic w={14} h={14} className="-mt-px">
            <path d="M.7.7h12.600v12.600H.7zM4 1v12M4.500 9.500h9" stroke="#fff" strokeWidth="1.500" />
            <path d="M7 3.500h3.500V7H7z" stroke="#fff" />
          </Ic>
        </div>
        <Ic w={14} h={13} className="-mt-[2px] ml-[14px]">
          <path d="M0 0h6v5H0zM8 0h6v5H8zM0 8h6v5H0zM8 8h6v5H8z" fill="#fff" opacity=".9" />
        </Ic>
        <Ic w={14} h={14} className="-mt-[2px] ml-[26px]">
          <path d="M.5 1.500H6l1 1 1-1h5.500v10H8l-1 1-1-1H.5zM7 3v10M2 4.500h4M2 6.500h4M2 8.500h4M8 4.500h4M8 6.500h4M8 8.500h4" stroke="#fff" />
        </Ic>
        <Ic w={14} h={14} className="ml-[28px]">
          <path d="M0 1h14M2.500 1v7.500h9V1M7 9v4M4 13.500h6M4.500 4.500h5" stroke="#fff" strokeWidth="1.200" />
        </Ic>
        <div className="ml-[18px] h-[2px] w-[9px] bg-white" />
        <div className="ml-[4px] flex h-full w-[126px] items-center">
          <div className="h-px w-[63px] bg-white" />
          <div className="h-[5px] w-px bg-white" />
          <div className="h-px w-[2px] bg-white" />
          <div className="h-[15px] w-[5px] bg-white" />
          <div className="h-px flex-1 bg-white" />
        </div>
        <Ic w={11} h={11} className="ml-[4px]">
          <path d="M0 5.500h11M5.500 0v11" stroke="#fff" strokeWidth="2" />
        </Ic>
        <Label t="125%" w={30} className="ml-[17px]" />
        <Ic w={15} h={15} className="ml-[17px] mr-[7px]">
          <path d="M.5.5h14v14H.5zM7.500 1v4M7.500 10v4M1 7.500h4M10 7.500h4M5.500 3.500l2-2 2 2M5.500 11.500l2 2 2-2M3.500 5.500l-2 2 2 2M11.500 5.500l2 2-2 2" stroke="#fff" strokeWidth=".9" />
        </Ic>
      </div>
    </div>
  );
}

function Cell({ open = false, className = "", children }: { open?: boolean; className?: string } & Kids) {
  return (
    <div className={`flex h-full w-[62px] shrink-0 flex-col items-center ${className}`}>
      <div className="flex h-[47px] items-center pt-[3px]">{children}</div>
      {open && <div className="h-[3px] w-[51px] bg-[#76b9ed]" />}
    </div>
  );
}

function Taskbar() {
  return (
    <div className="flex h-[50px] bg-black text-white">
      <div className="flex w-[60px] items-center pl-[20px]">
        <Ic w={20} h={20}>
          <path d="M0 3l8.500-1.200V9.500H0zM9.500 1.600L20 0v9.500H9.500zM0 10.500h8.500v7.700L0 17zM9.500 10.500H20V20L9.500 18.400z" fill="#fff" />
        </Ic>
      </div>
      <div className="flex w-[430px] items-center bg-[#333]">
        <Ic w={28} h={28} className="ml-[11px]">
          <circle cx="14" cy="14" r="12" stroke="#fff" strokeWidth="3.500" />
        </Ic>
        <Label t="Ask me anything" w={131} className="ml-[7px] mt-[2px] text-[17px] font-light text-[#a8a8a8]" />
        <Ic w={14} h={21} className="ml-auto mr-[19px]">
          <path d="M4 1h6v13H4zM1 10v4.500l2 2h8l2-2V10M7 17v3M4 20h6" stroke="#999" strokeWidth="1.600" />
        </Ic>
      </div>
      <div className="flex w-[63px] items-center justify-center pr-[3px]">
        <Ic w={24} h={18}>
          <path d="M4.500.5h15v17h-15zM3 3.500H.5v11H3M21 3.500h2.500v11H21" stroke="#fff" />
        </Ic>
      </div>
      <Cell open>
        <Ic w={28} h={28}>
          <path d="M14 14L1.900 7A14 14 0 0 1 26.100 7z" fill="#db4437" />
          <path d="M14 14L26.100 7A14 14 0 0 1 14 28z" fill="#ffcd40" />
          <path d="M14 14v14A14 14 0 0 1 1.900 7z" fill="#0f9d58" />
          <path d="M14 7.500h12.400l-.3-.5H14zM14 7.500L1.900 7l6.500 10z" fill="#db4437" />
          <path d="M19.800 17L14 28l-2-7.500z" fill="#ffcd40" />
          <circle cx="14" cy="14" r="6.600" fill="#f1f1f1" />
          <circle cx="14" cy="14" r="5.100" fill="#4285f4" />
        </Ic>
      </Cell>
      <Cell>
        <Ic w={28} h={26}>
          <path d="M8.500 1L27 5.500V18L8.500 13z" fill="#35a6f2" stroke="#9fd0ee" />
          <path d="M9 2L26 6 9 12z" fill="#5fc0f8" />
          <path d="M11 17l7-1 4 2-7 2z" fill="#cfd6da" />
          <path d="M0 20l9-2 9 4-8 3z" fill="#d8dde0" />
          <path d="M17 22l5-1.500 3 1.500-5 2z" fill="#b9c1c6" />
          <path d="M3 20l10 4M6 19.300l10 3.500" stroke="#8d979d" strokeWidth=".6" />
        </Ic>
      </Cell>
      <div className="ml-px flex">
        <div className="flex h-full w-[57px] flex-col bg-[#333]">
          <div className="flex h-[47px] items-center pl-[16px] pt-[3px]">
            <OfficeIcon letter="W" dark="#2b579a" kind="doc" />
          </div>
          <div className="h-[3px] bg-[#76b9ed]" />
        </div>
        <div className="flex h-full w-[4px] flex-col border-l border-black bg-[#222]">
          <div className="mt-auto h-[3px] bg-[#5d93bd]" />
        </div>
      </div>
      <div className="ml-px mr-px flex w-[61px] flex-col bg-[#333]">
        <div className="flex h-[47px] items-center pl-[16px] pt-[3px]">
          <OfficeIcon letter="P" dark="#d24726" kind="chart" />
        </div>
        <div className="h-[3px] bg-[#76b9ed]" />
      </div>
      <Cell className="-ml-px">
        <OfficeIcon letter="X" dark="#217346" kind="grid" />
      </Cell>
      <Cell open>
        <Ic w={28} h={24}>
          <path d="M0 1h11l2 2h15v20H0z" fill="#ffe693" />
          <path d="M0 0h11l2 4H0z" fill="#f7c331" />
          <path d="M2 2h7" stroke="#fff" />
          <path d="M5 12h18v11h-5v-6h-8v6H5z" fill="#3db3ea" />
        </Ic>
      </Cell>
      <Cell>
        <Ic w={22} h={30}>
          <path d="M0 0h22v30H0z" fill="#fff" />
          <path d="M2 2h18v5H2z" fill="#000" />
          {[10, 17, 24].map((y) =>
            [2, 9, 16].map((x) => <path key={`${x}-${y}`} d={`M${x} ${y}h4l-4 4zM${x + 1} ${y}h3v3z`} fill="#000" />),
          )}
        </Ic>
      </Cell>
      <Cell>
        <Ic w={28} h={28} className="-mt-[3px]">
          <path d="M10 1l17 2-4 23L1 20z" fill="#5fa9b8" />
          <path d="M11 3l14 2-7 18L3 19z" fill="#a8dbe4" />
          <path d="M25 4l2 19-6 4z" fill="#b39b63" />
          <path d="M1 20l20 4 1 3z" fill="#dff2f5" />
          <path d="M11 1l15 2" stroke="#ccc" strokeWidth="2" strokeDasharray="1.500 1" />
        </Ic>
      </Cell>
      <Cell>
        <Ic w={28} h={28}>
          <path d="M1 6l5-1v14l11 4v4L1 22z" fill="#e23a45" />
          <path d="M6 4h7v7H6z" fill="#f09a3e" />
          <path d="M6 10l7 1v5l-7-1z" fill="#4bb34b" />
          <path d="M6 16l6 1v5l-6-2z" fill="#4f9bea" />
          <path d="M13 16l6 1v6l-6-2z" fill="#2b62d9" />
          <path d="M14 8l7 4-2 5-6-3z" fill="#62c966" />
          <path d="M19 14l4-1v8l-6 5v-4z" fill="#a247c9" />
          <path d="M18 1l6 3-1 4-6-3z" fill="#d886e8" />
          <path d="M24 17h4v3h-4z" fill="#2ba5e0" />
        </Ic>
      </Cell>
      <Cell>
        <Ic w={28} h={22}>
          <path d="M0 13l11-5 17 5-15 6z" fill="#e9e9e9" />
          <path d="M0 13l13 5v4L0 17z" fill="#9b9b9b" />
          <path d="M13 18l15-5v4l-15 5z" fill="#cfcfcf" />
          <path d="M2 2l6-2 15 4v5l-10 4-6-3V6z" fill="#cda85c" />
          <path d="M2 2l6-2 15 4-9 3z" fill="#e6cb8c" />
          <path d="M3 16l2 1" stroke="#3c3" strokeWidth="1.500" />
        </Ic>
      </Cell>
      <Cell open>
        <Ic w={28} h={28} className="-mt-[3px]">
          <path d="M1 1h26v26H1z" fill="#2a0606" stroke="#d4180c" strokeWidth="2" />
          <path d="M13 6c3 0 1 6-1 9s-6 7-6 5 6-4 10-4 6 2 5 3-5-2-7-5-3-8-1-8z" stroke="#eee" strokeWidth="1.300" />
        </Ic>
      </Cell>
      <Cell open>
        <Ic w={24} h={27}>
          <path
            d="M0 12C2 3 8 0 13 0c7 0 11 5 11 12v3H8c0 4 4 7 9 7 2 0 4-.5 6-2v5c-2 1.500-5 2-8 2-6 0-11-4-11-10 0-4 2-7 5-9-1 2-1.500 3-1 3h8.500c0-3-2-5-5.500-5-5 0-9 3-12 6z"
            fill="#0078d7"
          />
        </Ic>
      </Cell>
      <div className="ml-auto flex h-full items-center">
        <Ic w={31} h={31}>
          <circle cx="15.500" cy="15.500" r="14" fill="#2f9e66" stroke="#fff" strokeWidth="2.500" />
          <path d="M2 15.500h6l2-4 2.500 9L16 6l3 16 2.500-9 1.500 3h6" stroke="#fff" strokeWidth="1.800" />
        </Ic>
        <div className="ml-[20px] flex h-[27px] w-[65px] border-[3px] border-white text-[13px]">
          <div className="flex h-full w-[41px] items-center bg-[#169c48]">
            <Label t="69%" w={26} className="ml-[14px]" />
          </div>
        </div>
        <div className="h-[13px] w-[3px] bg-white" />
        <Ic w={12} h={20} className="ml-[7px]">
          <path d="M2 0h3v6h2V0h3v6h2v4c0 3-2 4-4 5v5H4v-5c-2-1-4-2-4-5V6h2z" fill="#fff" />
        </Ic>
        <Ic w={16} h={9} className="ml-[14px]">
          <path d="M.5 8.500L8 1l7.500 7.500" stroke="#fff" strokeWidth="1.300" />
        </Ic>
        <Ic w={19} h={14} className="ml-[12px]">
          <path d="M1 4.500h3l4-4v13l-4-4H1zM11 4l7 7M18 4l-7 7" stroke="#fff" strokeWidth="1.200" />
        </Ic>
        <Ic w={16} h={16} className="ml-[14px]">
          <path d="M1 15A14 14 0 0 1 15 1M5 15.500A10.500 10.500 0 0 1 15.500 5M8.500 15.500A7 7 0 0 1 15.500 9" stroke="#bbb" strokeWidth="1.200" />
          <circle cx="13.500" cy="13.500" r="1.800" fill="#fff" />
        </Ic>
        <Label t="ENG" w={28} className="ml-[15px] text-[14px]" />
        <div className="ml-[16px] flex h-full w-[76px] flex-col items-center gap-[2px] pt-[3px] text-[14px] leading-[21px]">
          <Label t="2:19 PM" w={51} />
          <Label t="2016-12-05" w={75} />
        </div>
        <Ic w={20} h={20} className="ml-[23px]">
          <path d="M0 0h20v16h-7l-3 4-3-4H0z" fill="#fff" />
          <path d="M4 4.500h12M4 8h12M4 11.500h8" stroke="#000" />
        </Ic>
        <div className="ml-[25px] mr-[5px] h-full w-px bg-[#555]" />
      </div>
    </div>
  );
}

export default function App() {
  return (
    <div className="h-[1080px] w-[1920px] overflow-hidden bg-white font-['Open_Sans',sans-serif] text-[#444]">
      <TitleBar />
      <Tabs />
      <Ribbon />
      <Workspace />
      <StatusBar />
      <Taskbar />
    </div>
  );
}
